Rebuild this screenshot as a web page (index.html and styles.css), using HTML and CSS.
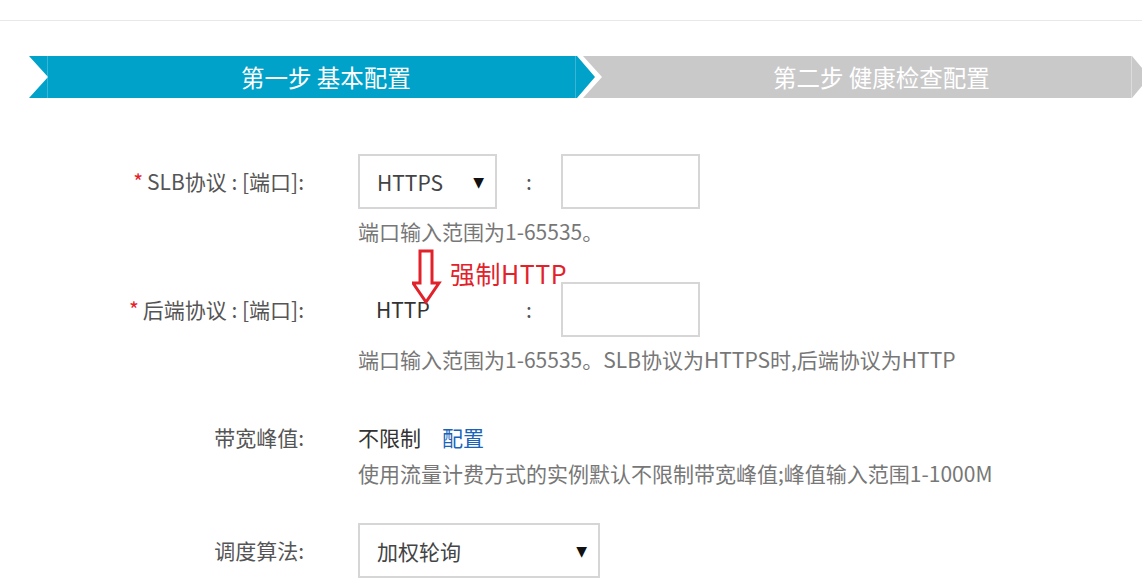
FILE: index.html
```html
<!DOCTYPE html>
<html lang="zh-CN">
<head>
<meta charset="utf-8">
<title>SLB 配置</title>
<link rel="stylesheet" href="styles.css">
</head>
<body>
<div class="topbar"></div>

<div class="steps">
  <div class="step step-active">第一步 基本配置</div>
  <div class="step step-next">第二步 健康检查配置</div>
</div>

<div class="form">
  <div class="row row-first">
    <div class="label label-tall"><span class="req">*</span>SLB协议 : [端口]:</div>
    <div class="field">
      <div class="controls">
        <div class="select select-sm"><span>HTTPS</span><span class="caret">▼</span></div>
        <div class="colon">:</div>
        <div class="input"></div>
      </div>
      <div class="hint">端口输入范围为1-65535。</div>
    </div>
  </div>

  <div class="row row-second">
    <div class="label label-tall"><span class="req">*</span>后端协议 : [端口]:</div>
    <div class="field">
      <div class="controls">
        <div class="static">HTTP</div>
        <div class="colon">:</div>
        <div class="input"></div>
      </div>
      <div class="hint">端口输入范围为1-65535。SLB协议为HTTPS时,后端协议为HTTP</div>
    </div>
  </div>

  <div class="row row-third">
    <div class="label label-short">带宽峰值:</div>
    <div class="field">
      <div class="plain"><span class="value">不限制</span><a class="link" href="#">配置</a></div>
      <div class="hint">使用流量计费方式的实例默认不限制带宽峰值;峰值输入范围1-1000M</div>
    </div>
  </div>

  <div class="row row-fourth">
    <div class="label label-tall">调度算法:</div>
    <div class="field">
      <div class="controls">
        <div class="select select-lg"><span>加权轮询</span><span class="caret">▼</span></div>
      </div>
    </div>
  </div>

  <svg class="note-arrow" width="30" height="56" viewBox="0 0 30 56" aria-hidden="true">
    <path d="M8 2 H20 V34 H27 L14 53 L1 34 H8 Z" fill="none" stroke="#e2222b" stroke-width="3" stroke-linejoin="miter"/>
  </svg>
  <div class="note-text">强制HTTP</div>
</div>
</body>
</html>
```

FILE: styles.css
```css
html, body {
  margin: 0;
  padding: 0;
  overflow: hidden;
  background: #ffffff;
}

body {
  width: 1142px;
  height: 586px;
  font-family: "Noto Sans CJK SC", "Microsoft YaHei", sans-serif;
  color: #555555;
}

.topbar {
  height: 20px;
  border-bottom: 1px solid #e8e8e8;
}

.steps {
  display: flex;
  margin-top: 35px;
  padding-left: 29px;
}

.step {
  height: 42px;
  line-height: 42px;
  font-size: 23.5px;
  color: #ffffff;
  text-align: center;
  flex: none;
  box-sizing: border-box;
}

.step-active {
  width: 566px;
  padding-left: 28px;
  background-color: #00a2ca;
  clip-path: polygon(0 0, calc(100% - 18px) 0, 100% 50%, calc(100% - 18px) 100%, 0 100%, 19px 50%);
  background-image: linear-gradient(to right,
    transparent 18px, rgba(255,255,255,0.22) 18px, rgba(255,255,255,0.22) 19px, transparent 19px,
    transparent calc(100% - 20px), rgba(255,255,255,0.22) calc(100% - 20px), rgba(255,255,255,0.22) calc(100% - 19px), transparent calc(100% - 19px));
}

.step-next {
  width: 559px;
  margin-left: -12px;
  padding-left: 38px;
  background-color: #c9c9c9;
  clip-path: polygon(0 0, calc(100% - 10px) 0, 100% 12px, 100% calc(100% - 12px), calc(100% - 10px) 100%, 0 100%, 19px 50%);
  background-image: linear-gradient(to right,
    transparent calc(100% - 11px), rgba(255,255,255,0.35) calc(100% - 11px), rgba(255,255,255,0.35) calc(100% - 10px), transparent calc(100% - 10px));
}

.form {
  position: relative;
  margin-top: 56px;
}

.row {
  display: grid;
  grid-template-columns: 304px 1fr;
  column-gap: 54px;
  font-size: 21px;
}

.row-second { margin-top: 37px; }
.row-third { margin-top: 50px; }
.row-fourth { margin-top: 36px; }

.label {
  text-align: right;
  color: #555555;
  white-space: nowrap;
}

.label-tall { line-height: 55px; }
.label-short { line-height: 28px; }

.req {
  color: #e4202a;
  margin-right: 4px;
}

.controls {
  display: flex;
  align-items: stretch;
  height: 55px;
}

.select {
  box-sizing: border-box;
  height: 55px;
  border: 2px solid #d6d6d6;
  display: flex;
  align-items: center;
  justify-content: space-between;
  padding: 0 11px 0 17px;
  color: #444444;
}

.select-sm { width: 139px; }
.select-lg { width: 242px; }

.caret {
  font-size: 14px;
  color: #111111;
  font-family: "DejaVu Sans", sans-serif;
}

.static {
  box-sizing: border-box;
  width: 139px;
  padding-left: 18px;
  line-height: 55px;
  color: #333333;
}

.colon {
  width: 64px;
  text-align: center;
  line-height: 55px;
  color: #555555;
}

.input {
  box-sizing: border-box;
  width: 139px;
  height: 55px;
  border: 2px solid #d6d6d6;
}

.hint {
  margin-top: 8px;
  line-height: 28px;
  color: #777777;
  white-space: nowrap;
}

.plain {
  line-height: 28px;
}

.value {
  color: #333333;
}

.link {
  color: #1a63b8;
  text-decoration: none;
  margin-left: 21px;
}

.note-arrow {
  position: absolute;
  left: 412px;
  top: 95px;
}

.note-text {
  position: absolute;
  left: 450px;
  top: 103px;
  font-size: 25px;
  letter-spacing: 0.5px;
  line-height: 32px;
  color: #e2222b;
  white-space: nowrap;
}
```
